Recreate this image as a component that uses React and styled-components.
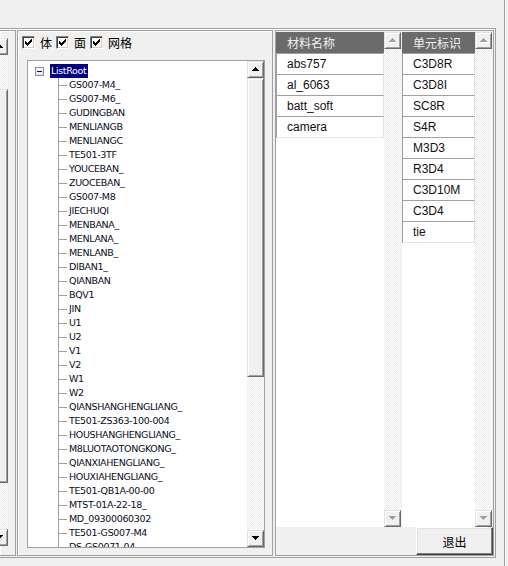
import React from 'react';
import styled, { createGlobalStyle } from 'styled-components';

const GlobalStyle = createGlobalStyle`
    html, body {
        margin: 0;
        padding: 0;
        background: #f0f0f0;
    }
    body {
        font-family: "Liberation Sans", Arial, sans-serif;
        overflow: hidden;
    }
    * {
        box-sizing: border-box;
    }
`;

const treeItems = [
    'GS007-M4_', 'GS007-M6_', 'GUDINGBAN', 'MENLIANGB', 'MENLIANGC', 'TE501-3TF',
    'YOUCEBAN_', 'ZUOCEBAN_', 'GS007-M8', 'JIECHUQI', 'MENBANA_', 'MENLANA_',
    'MENLANB_', 'DIBAN1_', 'QIANBAN', 'BQV1', 'JIN', 'U1', 'U2', 'V1', 'V2', 'W1', 'W2',
    'QIANSHANGHENGLIANG_', 'TE501-ZS363-100-004', 'HOUSHANGHENGLIANG_',
    'M8LUOTAOTONGKONG_', 'QIANXIAHENGLIANG_', 'HOUXIAHENGLIANG_', 'TE501-QB1A-00-00',
    'MTST-01A-22-18_', 'MD_09300060302', 'TE501-GS007-M4', 'DS-GS0071-04'
];

const materials = ['abs757', 'al_6063', 'batt_soft', 'camera'];
const elements = ['C3D8R', 'C3D8I', 'SC8R', 'S4R', 'M3D3', 'R3D4', 'C3D10M', 'C3D4', 'tie'];

const cjk = `"Noto Sans CJK SC", "Liberation Sans", sans-serif`;

const Window = styled.div`
    display: flex;
    width: 508px;
    height: 566px;
    background: #f0f0f0;
    overflow: hidden;
`;

const Client = styled.div`
    flex: none;
    width: 504px;
    padding-top: 28px;
`;

const WindowEdge = styled.div`
    width: 2px;
    border-left: 1px solid #a0a0a0;
    border-right: 1px solid #fff;
`;

const Frame = styled.div`
    display: flex;
    margin-left: -2px;
    width: 498px;
    height: 530px;
    padding: 1px;
    border: 1px solid #a0a0a0;
    box-shadow: inset 1px 1px 0 #fff;
`;

const Panel = styled.div`
    flex: none;
    height: 100%;
    border: 1px solid #a0a0a0;
    box-shadow: inset 1px 1px 0 #fff;
    display: flex;
    flex-direction: column;
`;

const SidePanel = styled(Panel)`
    width: 16px;
    margin-right: 1px;
    border-left: none;
    padding-top: 7px;
    overflow: hidden;
`;

const MidPanel = styled(Panel)`
    width: 256px;
    margin-right: 2px;
    padding: 5px 0 0 4px;
`;

const RightPanel = styled(Panel)`
    width: 219px;
    padding-top: 1px;
    box-shadow: none;
`;

/* scrollbars */

const Bar = styled.div`
    flex: none;
    width: 17px;
    height: ${p => p.$height ? `${p.$height}px` : '100%'};
    margin-left: ${p => p.$shift || 0}px;
    display: flex;
    flex-direction: column;
`;

const raised = `
    background: #f0f0f0;
    border: 1px solid;
    border-color: #e3e3e3 #696969 #696969 #e3e3e3;
    box-shadow: inset 1px 1px 0 #fff, inset -1px -1px 0 #a0a0a0;
`;

const ArrowButton = styled.div`
    flex: none;
    height: 17px;
    display: flex;
    align-items: center;
    justify-content: center;
    ${raised}
`;

const Track = styled.div`
    flex: 1;
    display: flex;
    flex-direction: column;
    background: repeating-conic-gradient(#fff 0 25%, #ebebeb 0 50%) 0 0 / 2px 2px;
`;

const TrackGap = styled.div`
    flex: none;
    height: ${p => p.$h}px;
`;

const Thumb = styled.div`
    flex: none;
    height: ${p => p.$h}px;
    ${raised}
`;

const UP = 'M3 0h1v1h1v1h1v1h1v1H0V3h1V2h1V1h1z';
const DOWN = 'M0 0h7v1H6v1H5v1H4v1H3V3H2V2H1V1H0z';

const Arrow = ({ down, disabled }) => (
    <svg width="8" height="5" viewBox="0 0 8 5" shapeRendering="crispEdges">
        {disabled && <path d={down ? DOWN : UP} fill="#fff" transform="translate(1 1)" />}
        <path d={down ? DOWN : UP} fill={disabled ? '#a0a0a0' : '#000'} />
    </svg>
);

const ScrollBar = ({ disabled, thumbTop = 0, thumbHeight, height, shift }) => (
    <Bar $height={height} $shift={shift}>
        <ArrowButton><Arrow disabled={disabled} /></ArrowButton>
        <Track>
            {thumbHeight ? <TrackGap $h={thumbTop} /> : null}
            {thumbHeight ? <Thumb $h={thumbHeight} /> : null}
        </Track>
        <ArrowButton><Arrow down disabled={disabled} /></ArrowButton>
    </Bar>
);

/* checkboxes */

const CheckRow = styled.div`
    display: flex;
    align-items: center;
    height: 13px;
`;

const CheckBox = styled.span`
    flex: none;
    width: 13px;
    height: 13px;
    background: #fff;
    border: 1px solid;
    border-color: #808080 #fff #fff #808080;
    box-shadow: inset 1px 1px 0 #404040, inset -1px -1px 0 #d4d0c8;
    display: flex;
    align-items: center;
    justify-content: center;
`;

const CheckLabel = styled.span`
    font-family: ${cjk};
    font-size: 12px;
    line-height: 13px;
    color: #000;
    margin: 0 4px 0 5px;
`;

const CHECK = 'M6 0h1v1H6zM5 1h2v1H5zM0 2h1v1H0zM4 2h3v1H4zM0 3h2v1H0zM3 3h3v1H3zM0 4h5v1H0zM1 5h3v1H1zM2 6h1v1H2z';

const Check = ({ label }) => (
    <>
        <CheckBox>
            <svg width="7" height="7" viewBox="0 0 7 7" shapeRendering="crispEdges">
                <path d={CHECK} fill="#000" />
            </svg>
        </CheckBox>
        <CheckLabel>{label}</CheckLabel>
    </>
);

/* tree */

const TreeBox = styled.div`
    display: flex;
    width: 238px;
    height: 488px;
    margin: 11px 0 0 5px;
    border: 1px solid #a0a0a0;
    background: #fff;
`;

const TreeList = styled.div`
    flex: 1;
    overflow: hidden;
    padding: 3px 0 0 7px;
    font-family: "DejaVu Sans", "Liberation Sans", sans-serif;
    font-size: 9.5px;
    letter-spacing: -0.35px;
    color: #0a0a24;
`;

const RootRow = styled.div`
    display: flex;
    align-items: center;
    height: 14px;
`;

const Expander = styled.span`
    flex: none;
    width: 9px;
    height: 9px;
    margin-right: 6px;
    border: 1px solid #8c8c9c;
    background: linear-gradient(#fff, #e4e4ec);
    display: flex;
    align-items: center;
    justify-content: center;
    &::before {
        content: '';
        width: 5px;
        height: 1px;
        background: #10103a;
    }
`;

const Selected = styled.span`
    height: 14px;
    line-height: 14px;
    padding: 0 2px 0 1px;
    background: #000080;
    color: #fff;
`;

const Children = styled.div`
    margin-left: 23px;
    border-left: 1px solid #a0a0a0;
`;

const TreeRow = styled.div`
    display: flex;
    align-items: center;
    height: 14px;
    line-height: 14px;
    white-space: nowrap;
`;

const Connector = styled.span`
    flex: none;
    width: 8px;
    height: 1px;
    margin-right: 2px;
    background: #a0a0a0;
`;

/* tables */

const TableArea = styled.div`
    display: flex;
    height: 495px;
`;

const Column = styled.div`
    flex: none;
    width: ${p => p.$w}px;
    display: flex;
    flex-direction: column;
`;

const Header = styled.div`
    flex: none;
    height: 21px;
    line-height: 21px;
    padding-left: 11px;
    background: #6b6b6b;
    color: #f0f0f0;
    font-family: ${cjk};
    font-size: 12px;
`;

const Body = styled.div`
    flex: 1;
    background: #fff;
`;

const Cell = styled.div`
    height: 21px;
    line-height: 20px;
    padding-left: 10px;
    border-top: 1px solid #a0a0a0;
    border-left: 1px solid #a0a0a0;
    border-right: 1px solid #e3e3e3;
    font-size: 12px;
    color: #111;
    &:last-child {
        height: 22px;
        border-bottom: 1px solid #e3e3e3;
    }
`;

const ColumnGap = styled.div`
    flex: none;
    width: 1px;
`;

const Footer = styled.div`
    flex: 1;
    display: flex;
    justify-content: flex-end;
`;

const ExitButton = styled.button`
    width: 77px;
    height: 28px;
    margin: 0;
    padding: 0;
    font-family: ${cjk};
    font-size: 12px;
    color: #000;
    background: #f0f0f0;
    border: 1px solid;
    border-color: #fff #404040 #404040 #fff;
    box-shadow: inset -1px -1px 0 #808080, inset 1px 1px 0 #e3e3e3;
`;

const App = () => (
    <Window>
        <GlobalStyle />
        <Client>
            <Frame>
                <SidePanel>
                    <ScrollBar height={508} shift={-9} thumbTop={34} thumbHeight={394} />
                </SidePanel>
                <MidPanel>
                    <CheckRow>
                        <Check label="体" />
                        <Check label="面" />
                        <Check label="网格" />
                    </CheckRow>
                    <TreeBox>
                        <TreeList>
                            <RootRow>
                                <Expander />
                                <Selected>ListRoot</Selected>
                            </RootRow>
                            <Children>
                                {treeItems.map(name => (
                                    <TreeRow key={name}>
                                        <Connector />
                                        {name}
                                    </TreeRow>
                                ))}
                            </Children>
                        </TreeList>
                        <ScrollBar thumbHeight={299} />
                    </TreeBox>
                </MidPanel>
                <RightPanel>
                    <TableArea>
                        <Column $w={108}>
                            <Header>材料名称</Header>
                            <Body>
                                {materials.map(m => <Cell key={m}>{m}</Cell>)}
                            </Body>
                        </Column>
                        <ScrollBar disabled />
                        <ColumnGap />
                        <Column $w={73}>
                            <Header>单元标识</Header>
                            <Body>
                                {elements.map(e => <Cell key={e}>{e}</Cell>)}
                            </Body>
                        </Column>
                        <ScrollBar disabled />
                    </TableArea>
                    <Footer>
                        <ExitButton>退出</ExitButton>
                    </Footer>
                </RightPanel>
            </Frame>
        </Client>
        <WindowEdge />
    </Window>
);

export default App;
